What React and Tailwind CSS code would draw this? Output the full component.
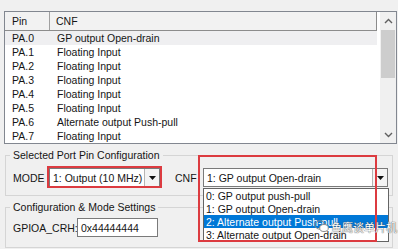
import React from 'react'

const rows = [
  ['PA.0', 'GP output Open-drain'],
  ['PA.1', 'Floating Input'],
  ['PA.2', 'Floating Input'],
  ['PA.3', 'Floating Input'],
  ['PA.4', 'Floating Input'],
  ['PA.5', 'Floating Input'],
  ['PA.6', 'Alternate output Push-pull'],
  ['PA.7', 'Floating Input'],
]

const cnfOptions = [
  '0: GP output push-pull',
  '1: GP output Open-drain',
  '2: Alternate output Push-pull',
  '3: Alternate output Open-drain',
]

const Chevron = ({ up }) => (
  <svg width="9" height="6" viewBox="0 0 9 6">
    <polyline
      points={up ? '1,5 4.5,1.5 8,5' : '1,1 4.5,4.5 8,1'}
      fill="none"
      stroke="#606060"
      strokeWidth="1.4"
    />
  </svg>
)

const DropArrow = () => (
  <svg width="7" height="4" viewBox="0 0 7 4">
    <polygon points="0,0 7,0 3.5,4" fill="#111" />
  </svg>
)

const Combo = ({ value, className }) => (
  <div className={`h-[19px] bg-white border border-[#7a7a7a] flex items-center ${className}`}>
    <span className="flex-1 pl-[3px] whitespace-nowrap overflow-hidden">{value}</span>
    <div className="w-[15px] h-full border-l border-[#b5b5b5] bg-[#f4f4f4] flex items-center justify-center">
      <DropArrow />
    </div>
  </div>
)

export default function App() {
  return (
    <div
      className="w-[398px] h-[249px] bg-[#f0f0f0] relative overflow-hidden text-[10.5px] leading-[12px] text-[#151515]"
      style={{ fontFamily: '"Liberation Sans", Arial, sans-serif' }}
    >
      {/* Pin list */}
      <div className="pt-[11px] pl-[4px] pr-[1px]">
        <div className="h-[133px] bg-white border border-[#828790] flex">
          <div className="flex-1 flex flex-col">
            <div className="h-[19px] mr-[3px] bg-[#f2f2f2] border-b border-r border-[#8c8c8c] flex items-center">
              <div className="w-[45px] h-full pl-[7px] flex items-center border-r border-[#a0a0a0]">Pin</div>
              <div className="pl-[6px]">CNF</div>
            </div>
            {rows.map(([pin, cnf], i) => (
              <div
                key={pin}
                className={`h-[14px] flex items-center mr-[3px] ${i === 0 ? 'bg-[#efeff1]' : ''}`}
              >
                <div className="w-[45px] pl-[7px]">{pin}</div>
                <div className="pl-[7px]">{cnf}</div>
              </div>
            ))}
          </div>
          <div className="w-[16px] bg-[#f0f0f0] flex flex-col items-center">
            <div className="h-[18px] flex items-center justify-center">
              <Chevron up />
            </div>
            <div className="w-[14px] h-[48px] bg-[#cdcdcd]" />
            <div className="flex-1" />
            <div className="h-[17px] flex items-center justify-center">
              <Chevron />
            </div>
          </div>
        </div>
      </div>

      {/* Selected Port Pin Configuration */}
      <fieldset className="mt-[5px] mx-[5px] px-[4px] pb-[8px] border border-[#d5d5d5]">
        <legend className="px-[3px]">Selected Port Pin Configuration</legend>
        <div className="flex items-center mt-[7px]">
          <span className="w-[39px] pl-[3px]">MODE</span>
          <Combo value="1: Output (10 MHz)" className="w-[111px]" />
          <span className="ml-[15px] w-[28px]">CNF</span>
          <Combo value="1: GP output Open-drain" className="w-[185px]" />
        </div>
      </fieldset>

      {/* Configuration & Mode Settings */}
      <fieldset className="mt-[5px] mx-[5px] px-[4px] pb-[10px] border border-[#d5d5d5]">
        <legend className="px-[3px]">Configuration &amp; Mode Settings</legend>
        <div className="flex items-center mt-[5px]">
          <span className="w-[67px] pl-[3px]">GPIOA_CRH:</span>
          <div className="w-[81px] h-[19px] bg-white border border-[#7a7a7a] flex items-center pl-[3px]">
            0x44444444
          </div>
        </div>
      </fieldset>

      {/* open CNF dropdown */}
      <div className="absolute left-[203px] top-[188px] w-[186px] bg-white border border-[#646464]">
        {cnfOptions.map((o, i) => (
          <div
            key={o}
            className={`h-[13px] pl-[2px] flex items-center whitespace-nowrap ${i === 2 ? 'bg-[#0078d7] text-white' : ''}`}
          >
            {o}
          </div>
        ))}
      </div>

      {/* red annotation boxes */}
      <div className="absolute left-[47px] top-[166px] w-[115px] h-[22px] border-2 border-[#dc3b40]" />
      <div className="absolute left-[198px] top-[155px] w-[179px] h-[87px] border-2 border-[#dc3b40]" />

      {/* watermark */}
      <div className="absolute left-[314px] top-[220px] flex items-center gap-[2px]">
        <svg width="15" height="13" viewBox="0 0 15 13">
          <ellipse cx="6" cy="5" rx="5.2" ry="4.2" fill="none" stroke="#8a8a8a" strokeWidth="1" />
          <ellipse cx="10" cy="8" rx="4.3" ry="3.5" fill="#fff" stroke="#8a8a8a" strokeWidth="1" />
        </svg>
        <span
          className="text-[11px] text-white"
          style={{
            fontFamily: '"Noto Sans CJK SC", sans-serif',
            textShadow: '0 0 1px #555, 0 0 1px #555',
          }}
        >
          鱼鹰谈单片机
        </span>
      </div>
    </div>
  )
}
